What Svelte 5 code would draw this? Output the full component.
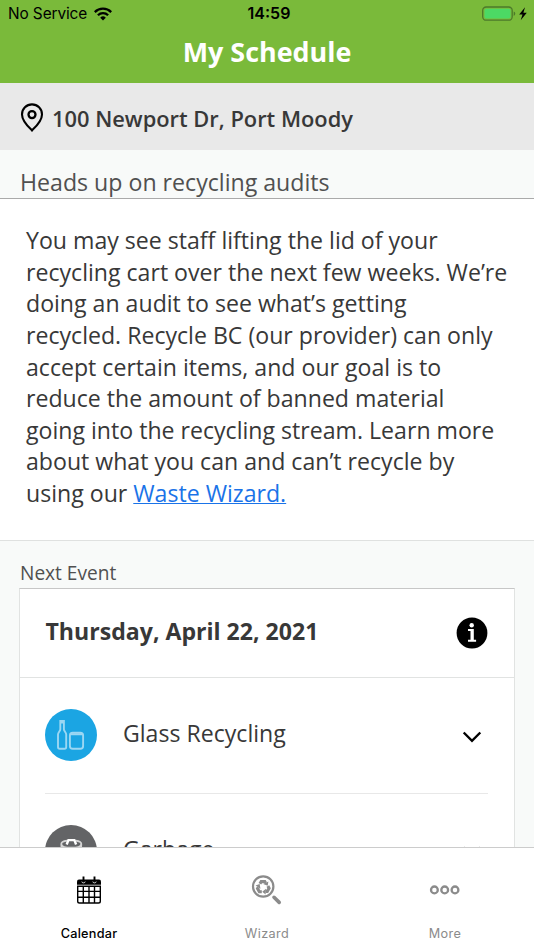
<script>
  const lines = [
    'You may see staff lifting the lid of your',
    'recycling cart over the next few weeks. We’re',
    'doing an audit to see what’s getting',
    'recycled. Recycle BC (our provider) can only',
    'accept certain items, and our goal is to',
    'reduce the amount of banned material',
    'going into the recycling stream. Learn more',
    'about what you can and can’t recycle by',
  ];

  const events = [
    { name: 'Glass Recycling', type: 'glass' },
    { name: 'Garbage', type: 'garbage' },
  ];

  const tabs = ['Calendar', 'Wizard', 'More'];
  let active = $state('Calendar');
</script>

<div class="screen">
  <header>
    <div class="status">
      <div class="carrier">
        <span>No Service</span>
        <svg width="18" height="14" viewBox="0 0 18 14">
          <g fill="none" stroke="#000" stroke-width="2.3">
            <path d="M.8 5.1a11.6 11.6 0 0 1 16.4 0" />
            <path d="M3.9 8.3a7.2 7.2 0 0 1 10.2 0" />
          </g>
          <path d="M9 13.6 6.2 10.7a4 4 0 0 1 5.6 0Z" />
        </svg>
      </div>
      <span class="time">14:59</span>
      <svg class="battery" width="46" height="16" viewBox="0 0 46 16">
        <rect x=".7" y="1" width="29.5" height="13.2" rx="3.5" fill="none" stroke="#4c792b" stroke-width="1.3" />
        <rect x="2.5" y="2.8" width="26" height="9.7" rx="1.8" fill="#4cd964" />
        <path d="M31.7 5.5q1.6.6 1.6 2.2t-1.6 2.2Z" fill="#4c792b" />
        <path d="m43 1.2-5.8 7.3h3.3l-1.8 5.7 6.1-7.4h-3.4Z" />
      </svg>
    </div>
    <h1>My Schedule</h1>
  </header>

  <div class="address">
    <svg width="24" height="30" viewBox="0 0 24 30" fill="none" stroke="#000">
      <path d="M12 27.4C9.3 24.7 2 18.2 2 11.4a10 10 0 0 1 20 0C22 18.2 14.7 24.7 12 27.4Z" stroke-width="2.1" />
      <circle cx="12" cy="11.6" r="3.5" stroke-width="2.3" />
    </svg>
    <span>100 Newport Dr, Port Moody</span>
  </div>

  <h2>Heads up on recycling audits</h2>

  <p class="message">
    {#each lines as line}{line}<br />{/each}using our <a href="#wizard">Waste Wizard.</a>
  </p>

  <section>
    <h3>Next Event</h3>
    <div class="card">
      <div class="date">
        <span>Thursday, April 22, 2021</span>
        <svg width="32" height="32" viewBox="0 0 32 32">
          <circle cx="16" cy="16" r="15.4" />
          <circle cx="15.7" cy="8.2" r="2.2" fill="#fff" />
          <path d="M12 12h5.8v10.8h2.3v2H12v-2h2.5v-8.7H12Z" fill="#fff" />
        </svg>
      </div>
      {#each events as event}
        <div class="event">
          <div class="badge {event.type}">
            <svg width="52" height="52" viewBox="0 0 52 52" fill="none" stroke="#fff">
              {#if event.type === 'glass'}
                <g stroke="#9bd7f3" stroke-width="1.9">
                  <path d="M15.3 12h3.6v8.2c0 2 2.3 3.2 2.3 5.3v12.5q0 1.8-1.7 1.8h-4.8q-1.7 0-1.7-1.8V25.5c0-2.1 2.3-3.3 2.3-5.3Z" />
                  <rect x="24.9" y="23.7" width="13.2" height="16" rx="2.8" />
                  <path d="M26 25.3h11M15.5 13.5h3.2" />
                </g>
              {:else}
                <path d="M22 15.7c-3 .4-5.7 1.500-5.700 3.300 0 5 20 5 20 0 0-1.800-2.600-2.900-5.600-3.300M16.300 19l1.300 20q8.600 4 17.400 0l1.300-20" stroke="#d5d5d5" stroke-width="1.8" />
                <path d="m21.7 19.5 1.700-4.400h6l1.700 4.400" stroke-width="2.4" />
              {/if}
            </svg>
          </div>
          <span class="name">{event.name}</span>
          <svg class="chevron" width="20" height="12" viewBox="0 0 20 12" fill="none" stroke="#000" stroke-width="2.4">
            <path d="m1.7 1.5 8.300 8.300 8.300-8.300" />
          </svg>
        </div>
      {/each}
    </div>
  </section>

  <nav>
    {#each tabs as tab}
      <button class:active={active === tab} onclick={() => (active = tab)}>
        <svg width="32" height="32" viewBox="0 0 32 32" fill="none" stroke="currentColor">
          {#if tab === 'Calendar'}
            <path d="M6 5.5h20q2 0 2 2v3.200H4V7.500q0-2 2-2Z" fill="currentColor" stroke="none" />
            <path d="M4.700 12.300v14.900q0 1.800 1.800 1.800h19q1.800 0 1.800-1.800V12.300ZM10.300 12v17M16 12v17M21.500 12v17M5 17.400h22M5 23.200h22" stroke-width="1.4" />
            <path d="M8.900 7.500a1.600 1.400 0 0 0 3.200 0M19.900 7.500a1.600 1.400 0 0 0 3.200 0" stroke="#fff" stroke-width=".8" />
            <path d="M10.500 2.500V8M21.500 2.500V8" stroke-width="1.9" />
          {:else if tab === 'Wizard'}
            <circle cx="12.200" cy="12.500" r="10.200" stroke-width="2.2" />
            <path d="m23 23.300 5.200 5.100" stroke-width="3.6" stroke-linecap="round" />
            <g transform="translate(12.2 13.2)">
              {#each [0, 120, 240] as angle}
                <g transform="rotate({angle})">
                  <path d="M-3.300-3.500-2-5.600H1.600L2.400-4.200" stroke-width="3.1" />
                  <path d="M0-3.200 5.200-5.800 4.500-1.500Z" fill="currentColor" stroke="none" />
                </g>
              {/each}
            </g>
          {:else}
            <g stroke-width="2.3">
              <circle cx="5.4" cy="15.9" r="3.4" />
              <circle cx="15.7" cy="15.9" r="3.4" />
              <circle cx="26" cy="15.9" r="3.4" />
            </g>
          {/if}
        </svg>
        <span>{tab}</span>
      </button>
    {/each}
  </nav>
</div>

<style>
  :global(body) {
    margin: 0;
  }

  .screen {
    height: 950px;
    overflow: hidden;
    display: flex;
    flex-direction: column;
    background: #f8faf9;
    color: #383838;
    font-family: "Open Sans", sans-serif;
  }

  header {
    height: 83px;
    flex: none;
    background: #7aba3a;
  }

  .status {
    height: 27px;
    padding: 0 6px 0 8px;
    display: grid;
    grid-template-columns: 1fr auto 1fr;
    align-items: center;
    font: 16px/27px Inter, sans-serif;
    color: #000;
  }

  .carrier {
    display: flex;
    align-items: center;
    gap: 7px;
    font-size: 15.4px;
    letter-spacing: -0.1px;
  }

  .time {
    padding-left: 2px;
    font-weight: 600;
  }

  .battery {
    justify-self: end;
  }

  h1 {
    margin: 7px 0 0;
    text-align: center;
    color: #fff;
    font-size: 26.9px;
    line-height: 36px;
    font-weight: 700;
  }

  .address {
    height: 67px;
    flex: none;
    box-sizing: border-box;
    padding: 3px 20px 0;
    display: flex;
    align-items: center;
    gap: 8px;
    background: #e9e9e9;
    font-size: 21.85px;
    font-weight: 600;
  }

  h2 {
    height: 49px;
    flex: none;
    box-sizing: border-box;
    margin: 0;
    padding: 17px 20px 0;
    border-bottom: 1px solid #aaa;
    font-size: 23.15px;
    line-height: 31px;
    font-weight: 400;
    color: #505050;
  }

  .message {
    height: 342px;
    flex: none;
    box-sizing: border-box;
    margin: 0;
    padding: 26px 26px 0;
    border-bottom: 1px solid #dfe1e0;
    background: #fff;
    font-size: 23.12px;
    line-height: 31.62px;
    white-space: nowrap;
  }

  .message a {
    color: #1a73e8;
    text-decoration-thickness: 1px;
  }

  section {
    flex: 1;
    min-height: 0;
    overflow: hidden;
    padding: 17px 19px 0;
  }

  h3 {
    height: 30px;
    margin: 0 1px;
    font-size: 19.1px;
    line-height: 31px;
    font-weight: 400;
    color: #505050;
  }

  .card {
    background: #fff;
    border: 1px solid #e1e3e2;
    border-top-color: #c7c7c7;
  }

  .date {
    height: 88px;
    padding: 0 26px 0 25.5px;
    display: flex;
    align-items: center;
    justify-content: space-between;
    border-bottom: 1px solid #e1e3e2;
    font-size: 23.1px;
    font-weight: 700;
  }

  .date span {
    padding-bottom: 5px;
  }

  .event {
    height: 115.5px;
    box-sizing: border-box;
    margin: 0 26px 0 25px;
    display: flex;
    align-items: center;
    border-bottom: 1px solid #e8e8e8;
    font-size: 23.1px;
  }

  .badge {
    width: 52px;
    height: 52px;
    border-radius: 50%;
    background: #1ba5e3;
  }

  .badge.garbage {
    background: #636466;
  }

  .name {
    flex: 1;
    margin-left: 26px;
    padding-bottom: 4px;
  }

  .chevron {
    margin: 3px 6px 0 0;
  }

  nav {
    height: 103px;
    flex: none;
    box-sizing: border-box;
    border-top: 1px solid #ccc;
    display: flex;
    background: #fff;
  }

  button {
    flex: 1;
    padding: 26px 0 0;
    border: 0;
    background: none;
    color: #8b8b8b;
    display: flex;
    flex-direction: column;
    align-items: center;
    font: 12.7px/18px Inter, sans-serif;
    letter-spacing: 0.4px;
  }

  button.active {
    color: #000;
    font-weight: 500;
    letter-spacing: 0.25px;
  }

  button span {
    margin-top: 19px;
  }
</style>
